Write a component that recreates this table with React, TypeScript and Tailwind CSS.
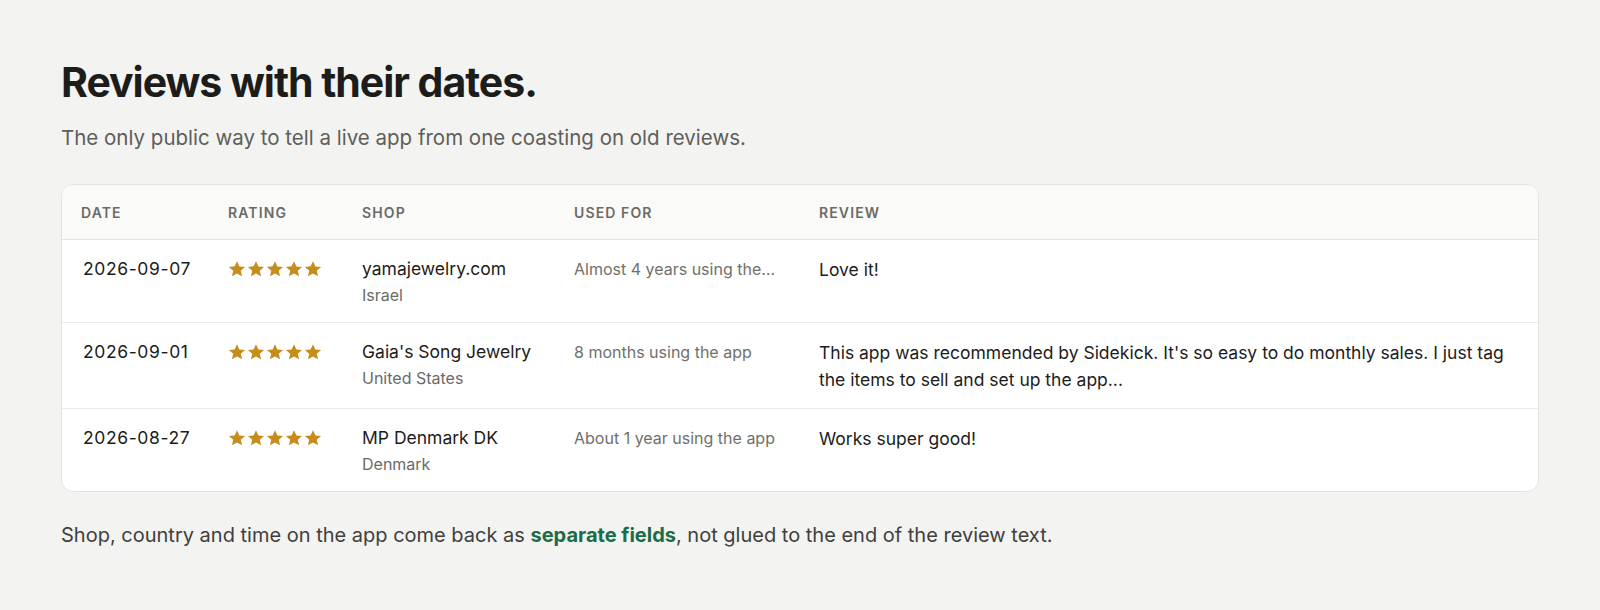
const reviews = [
  {
    date: "2026-09-07",
    shop: "yamajewelry.com",
    country: "Israel",
    usedFor: "Almost 4 years using the…",
    text: "Love it!"
  },
  {
    date: "2026-09-01",
    shop: "Gaia's Song Jewelry",
    country: "United States",
    usedFor: "8 months using the app",
    text: "This app was recommended by Sidekick. It's so easy to do monthly sales. I just tag the items to sell and set up the app..."
  },
  {
    date: "2026-08-27",
    shop: "MP Denmark DK",
    country: "Denmark",
    usedFor: "About 1 year using the app",
    text: "Works super good!"
  }
];

const cols = "grid grid-cols-[146px_134px_212px_245px_1fr]";

function Stars() {
  return (
    <div className="flex gap-[1px] text-[#c68d1c]">
      {[0, 1, 2, 3, 4].map((i) => (
        <svg key={i} viewBox="0 0 24 24" className="w-[18px] h-[18px]" fill="currentColor">
          <path d="M12 1.5l3.2 7 7.6.7-5.8 5.1 1.8 7.5L12 17.9l-6.8 3.9 1.8-7.5-5.8-5.1 7.6-.7z" />
        </svg>
      ))}
    </div>
  );
}

export default function App() {
  return (
    <div className="min-h-[610px] bg-[#f3f3f1] px-[61px] pt-[58px] font-['Inter',sans-serif] text-[#1c1c1a]">
      <h1 className="text-[41px] font-bold tracking-[-0.025em] leading-[48px]">
        Reviews with their dates.
      </h1>
      <p className="mt-[18px] text-[20.5px] leading-[28px] text-[#5e5e5a]">
        The only public way to tell a live app from one coasting on old reviews.
      </p>

      {/* Reviews table */}
      <div className="mt-[32px] rounded-[12px] border border-[#e3e3df] bg-white overflow-hidden">
        <div className={`${cols} h-[55px] items-center bg-[#fafaf8] border-b border-[#e3e3df] text-[14px] font-semibold uppercase tracking-[0.08em] text-[#6b6b66]`}>
          <div className="pl-[19px]">Date</div>
          <div className="pl-[20px]">Rating</div>
          <div className="pl-[20px]">Shop</div>
          <div className="pl-[20px]">Used for</div>
          <div className="pl-[20px]">Review</div>
        </div>

        {reviews.map((r, i) => (
          <div
            key={r.date}
            className={`${cols} pt-[16px] pb-[15px] ${i < reviews.length - 1 ? "border-b border-[#ebebe7]" : ""}`}
          >
            <div className="pl-[21px] text-[17.5px] leading-[26px] tracking-[0.035em]">{r.date}</div>
            <div className="pl-[20px] pt-[4px]">
              <Stars />
            </div>
            <div className="pl-[20px]">
              <div className="text-[17.5px] leading-[26px]">{r.shop}</div>
              <div className="mt-[1px] text-[16px] leading-[24px] text-[#6b6b66]">{r.country}</div>
            </div>
            <div className="pl-[20px] pr-[20px] min-w-0">
              <div className="truncate text-[16px] leading-[26px] text-[#70706b]">{r.usedFor}</div>
            </div>
            <div className="pl-[20px] pr-[22px] text-[17.5px] leading-[27px]">{r.text}</div>
          </div>
        ))}
      </div>

      <p className="mt-[29px] text-[20px] leading-[28px] text-[#3f3f3c]">
        Shop, country and time on the app come back as{" "}
        <span className="font-bold text-[#1b6b47]">separate fields</span>, not glued to the end of the review text.
      </p>
    </div>
  );
}
